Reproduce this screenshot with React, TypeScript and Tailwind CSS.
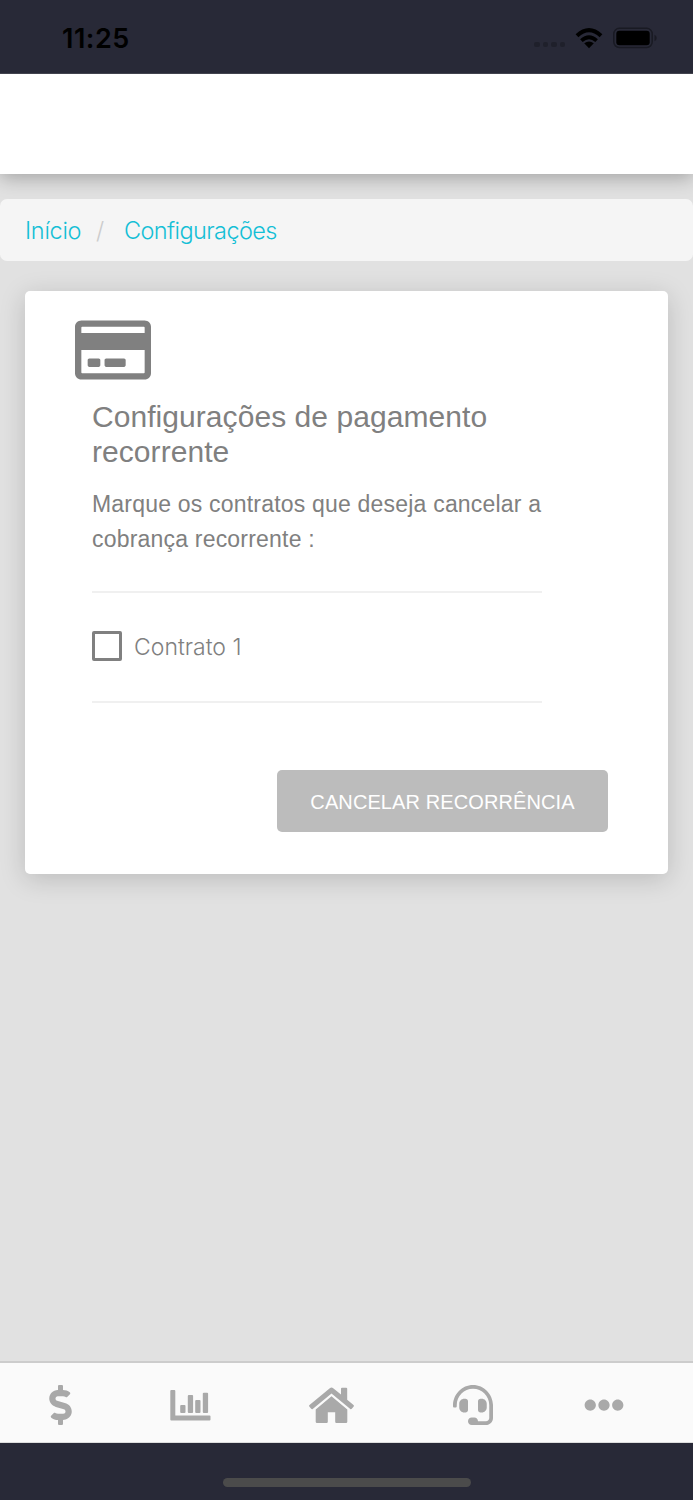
import { useState } from "react";
import {
    FaDollarSign,
    FaEllipsisH,
    FaHeadset,
    FaRegCreditCard,
} from "react-icons/fa";

const ChartIcon = ({ className }: { className?: string }) => (
    <svg className={className} width="41" height="40" viewBox="0 0 41 40" fill="currentColor">
        <path d="M1.3 5h3a1 1 0 0 1 1 1v24.4h34.2a1 1 0 0 1 1 1v3.2a1 1 0 0 1-1 1H1.3a1 1 0 0 1-1-1V6a1 1 0 0 1 1-1z" />
        <rect x="10.2" y="20" width="5.3" height="8" rx="1" />
        <rect x="17.8" y="10" width="5.3" height="18" rx="1" />
        <rect x="25.2" y="15" width="5.3" height="13" rx="1" />
        <rect x="32.8" y="7.7" width="5.3" height="20.3" rx="1" />
    </svg>
)

const HomeIcon = ({ className }: { className?: string }) => (
    <svg className={className} width="45" height="40" viewBox="0 0 45 40" fill="currentColor">
        <path d="M20.8 3.2Q22.5 1.9 24.2 3.2L32 9.6V3.7Q32 2.7 33 2.7h4.2q1 0 1 1v11L44.5 20q.8.7.2 1.5l-1.9 2.2q-.7.8-1.5.2L22.5 8.6 3.7 23.9q-.8.6-1.5-.2L.3 21.5q-.6-.8.2-1.5z" />
        <path d="M22.5 11.3 38.3 24.4v12.3q0 1.3-1.3 1.3H27.4q-1.2 0-1.2-1.2v-9.5h-7.4v9.5q0 1.2-1.2 1.2H8q-1.3 0-1.3-1.3V24.4z" />
    </svg>
)

const StatusBar = () => {
    return (
        <div className="flex h-[74px] shrink-0 items-start justify-between border-b border-[#42434e] bg-[#282937] pt-[24px] pr-[36px] pl-[62px] text-black">
            <span className="font-['Inter',sans-serif] text-[27px] leading-[30px] font-semibold tracking-[0.5px]">11:25</span>

            <div className="flex items-center pt-[3px]">
                <div className="flex gap-[3px] pt-[13px]">
                    <span className="size-[5.5px] rounded-[2px] bg-[#1f202b]" />
                    <span className="size-[5.5px] rounded-[2px] bg-[#1f202b]" />
                    <span className="size-[5.5px] rounded-[2px] bg-[#1f202b]" />
                    <span className="size-[5.5px] rounded-[2px] bg-[#1f202b]" />
                </div>
                <svg className="ml-[10px]" width="28" height="22" viewBox="0 0 28 22">
                    <path d="M14 21.2 L9.2 16.3 Q14 12.5 18.8 16.3 Z" fill="currentColor" />
                    <path d="M6.4 13.6 Q14 6.8 21.6 13.6" fill="none" stroke="currentColor" strokeWidth="3.8" />
                    <path d="M2 8.8 Q14 -2.6 26 8.8" fill="none" stroke="currentColor" strokeWidth="4" />
                </svg>
                <svg className="ml-[10px]" width="44" height="22" viewBox="0 0 44 22">
                    <rect x="0.8" y="1.3" width="38.4" height="19.2" rx="5.5" fill="none" stroke="#191a23" strokeWidth="1.5" />
                    <rect x="3.3" y="3.8" width="33.4" height="14.4" rx="3" fill="currentColor" />
                    <path d="M41.5 7.8 Q43.7 8.8 43.7 11 Q43.7 13.2 41.5 14.2 Z" fill="#191a23" />
                </svg>
            </div>
        </div>
    )
}

const Breadcrumb = () => {
    return (
        <nav className="mt-[25px] flex h-[62px] items-center rounded-[7px] bg-[#f5f5f5] pt-px pl-[25px] font-['Inter',sans-serif] text-[23.5px] font-light text-[#14bfd6]">
            <a href="#" className="w-[71px] tracking-[-0.3px]">Início</a>
            <span className="w-[28px] text-[#cccccc]">/</span>
            <a href="#" className="tracking-[-0.6px]">Configurações</a>
        </nav>
    )
}

const RecurringPaymentCard = () => {
    const [checked, setChecked] = useState(false);

    return (
        <section className="mx-[25px] mt-[30px] flex h-[583px] flex-col rounded-[5px] bg-white pt-[25px] text-[#808080] shadow-[0_5px_26px_rgba(0,0,0,0.17)]">
            <FaRegCreditCard className="ml-[50px] h-[68px] w-[76px]" />

            <div className="ml-[67px] w-[450px]">
                <h1 className="mt-[15px] text-[30px] leading-[35px] tracking-[0.06px] whitespace-nowrap">
                    Configurações de pagamento<br />recorrente
                </h1>
                <p className="mt-[18px] text-[23px] leading-[35px] tracking-[0.2px] whitespace-nowrap">
                    Marque os contratos que deseja cancelar a<br />cobrança recorrente :
                </p>

                <div className="mt-[34px] flex h-[112px] items-center border-y-2 border-[#f0f0f0]">
                    <label className="flex items-center gap-[12px]">
                        <input
                            type="checkbox"
                            checked={checked}
                            onChange={() => setChecked(!checked)}
                            className="mb-[2px] size-[30px] appearance-none rounded-[2px] border-[3px] border-[#808080] checked:bg-[#808080]"
                        />
                        <span className="font-['Inter',sans-serif] text-[23px] font-light">Contrato 1</span>
                    </label>
                </div>
            </div>

            <button className="mt-[67px] mr-[60px] h-[62px] w-[331px] self-end rounded-[5px] bg-[#bcbcbc] pt-[1px] text-[20px] tracking-[0.1px] whitespace-nowrap text-white">
                CANCELAR RECORRÊNCIA
            </button>
        </section>
    )
}

const TabBar = () => {
    return (
        <div className="flex h-[82px] shrink-0 items-center border-t-2 border-b border-t-[#cccccc] border-b-[#dddddd] bg-[#fafafa] pt-[5px] text-[40px] text-[#a9a9a9]">
            <FaDollarSign className="ml-[49px] w-[23px]" />
            <ChartIcon className="ml-[98px]" />
            <HomeIcon className="ml-[98px]" />
            <FaHeadset className="ml-[99px] w-[40px]" />
            <FaEllipsisH className="ml-[91.3px] w-[40px]" />
        </div>
    )
}

const App = () => {
    return (
        <div className="flex h-[1500px] w-[693px] flex-col overflow-hidden bg-[#e1e1e1] font-['Liberation_Sans',Arial,sans-serif]">
            <StatusBar />
            <header className="h-[100px] shrink-0 bg-white shadow-[0_4px_18px_rgba(0,0,0,0.28)] [clip-path:inset(0_0_-40px_0)]" />
            <main className="flex-1">
                <Breadcrumb />
                <RecurringPaymentCard />
            </main>
            <TabBar />
            <div className="flex h-[57px] shrink-0 justify-center bg-[#282937] pt-[35px]">
                <div className="h-[9px] w-[248px] rounded-full bg-[#4b4b4b]" />
            </div>
        </div>
    )
}

export default App
